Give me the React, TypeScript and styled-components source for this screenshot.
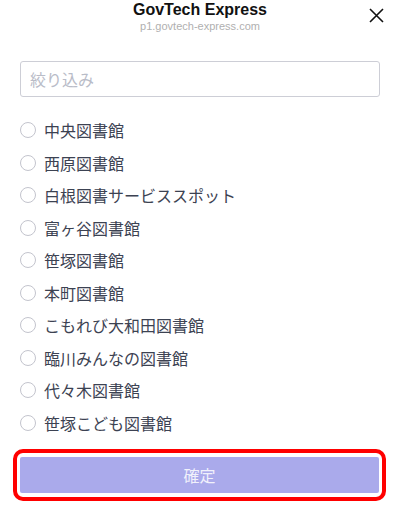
import styled, { createGlobalStyle } from 'styled-components'

const GlobalStyle = createGlobalStyle`
  html, body {
    margin: 0;
    padding: 0;
    background: #ffffff;
  }
  * {
    box-sizing: border-box;
  }
`

const libraries = [
  '中央図書館',
  '西原図書館',
  '白根図書サービススポット',
  '富ヶ谷図書館',
  '笹塚図書館',
  '本町図書館',
  'こもれび大和田図書館',
  '臨川みんなの図書館',
  '代々木図書館',
  '笹塚こども図書館',
]

const Sheet = styled.div`
  width: 400px;
  height: 516px;
  display: flex;
  flex-direction: column;
  font-family: 'Liberation Sans', 'Noto Sans CJK JP', sans-serif;
  overflow: hidden;
`

const Header = styled.header`
  position: relative;
  display: flex;
  flex-direction: column;
  align-items: center;
`

const Title = styled.div`
  font-size: 16px;
  font-weight: 700;
  line-height: 19px;
  color: #111111;
`

const Subtitle = styled.div`
  font-size: 11px;
  line-height: 14px;
  color: #b0b0b0;
`

const CloseButton = styled.button`
  position: absolute;
  top: 7px;
  right: 16px;
  width: 16px;
  height: 16px;
  padding: 0;
  border: none;
  background: none;
  display: flex;
  align-items: center;
  justify-content: center;
`

const Body = styled.div`
  display: flex;
  flex-direction: column;
  padding: 28px 20px 0 20px;
`

const FilterInput = styled.input`
  width: 360px;
  height: 36px;
  border: 1px solid #cdced6;
  border-radius: 3px;
  padding: 0 9px;
  font-family: 'Noto Sans CJK JP', sans-serif;
  font-size: 16px;
  color: #3c4150;
  outline: none;
  &::placeholder {
    color: #b9bcc8;
  }
`

const List = styled.ul`
  list-style: none;
  margin: 17px 0 0 0;
  padding: 0;
`

const Row = styled.li`
  height: 32.5px;
  display: flex;
  align-items: center;
  gap: 8px;
`

const Radio = styled.span`
  width: 16px;
  height: 16px;
  border: 1.2px solid #c3c4cd;
  border-radius: 50%;
  flex: none;
`

const Label = styled.span`
  font-family: 'Noto Sans CJK JP', sans-serif;
  font-size: 16px;
  line-height: 20px;
  color: #3c4252;
`

const Highlight = styled.div`
  margin: 10px 0 0 13px;
  width: 373px;
  border: 4px solid #ff0000;
  border-radius: 10px;
  padding: 4px 3px;
`

const Confirm = styled.button`
  width: 100%;
  height: 36px;
  border: none;
  border-radius: 2px;
  background: #aaaaeb;
  color: rgba(255, 255, 255, 0.85);
  font-family: 'Noto Sans CJK JP', sans-serif;
  font-size: 16px;
  display: flex;
  align-items: center;
  justify-content: center;
`

export default function App() {
  return (
    <>
      <GlobalStyle />
      <Sheet>
        <Header>
          <Title>GovTech Express</Title>
          <Subtitle>p1.govtech-express.com</Subtitle>
          <CloseButton aria-label="閉じる">
            <svg width="15" height="15" viewBox="0 0 15 15">
              <path d="M1 1 L14 14 M14 1 L1 14" stroke="#111" strokeWidth="1.6" />
            </svg>
          </CloseButton>
        </Header>
        <Body>
          <FilterInput placeholder="絞り込み" />
          <List>
            {libraries.map((name) => (
              <Row key={name}>
                <Radio />
                <Label>{name}</Label>
              </Row>
            ))}
          </List>
        </Body>
        <Highlight>
          <Confirm>確定</Confirm>
        </Highlight>
      </Sheet>
    </>
  )
}
